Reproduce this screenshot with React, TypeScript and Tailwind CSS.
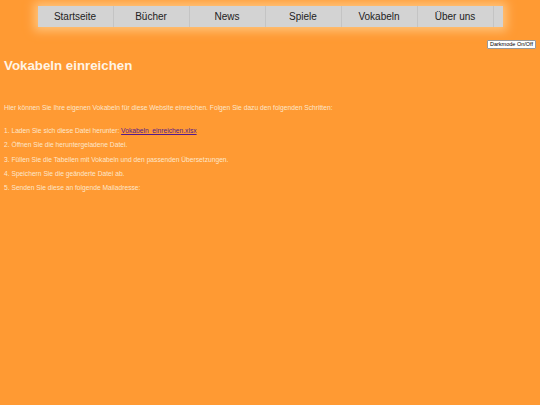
import React from "react";

const items = ["Startseite", "Bücher", "News", "Spiele", "Vokabeln", "Über uns"];

export default function App() {
  return (
    <div className="min-h-[405px] w-[540px] bg-[#ff9a33] font-['Liberation_Sans',Arial,sans-serif] relative">
      <div className="flex justify-center pt-[6px]">
        <div className="flex w-[465px] h-[21px] bg-[#d3d3d3] shadow-[0_0_9px_4px_#ffc27a]">
          {items.map((t) => (
            <div
              key={t}
              className="w-[76px] h-full flex items-center justify-center border-r border-[#c4c4c4] text-[10px] text-[#222]"
            >
              {t}
            </div>
          ))}
        </div>
      </div>
      <div className="flex justify-end pr-[4px] pt-[13px]">
        <button className="bg-white border border-[#999] rounded-[1px] px-[2px] h-[9px] leading-[7px] text-[5.5px] text-black">
          Darkmode On/Off
        </button>
      </div>
      <div className="px-[4px] text-[#fde6cc]">
        <h2 className="text-[13.3px] font-bold text-[#fff4e6] mt-[9px] leading-[16px]">Vokabeln einreichen</h2>
        <p className="text-[6.7px] mt-[30px] leading-[8px]">
          Hier können Sie Ihre eigenen Vokabeln für diese Website einreichen. Folgen Sie dazu den folgenden Schritten:
        </p>
        <div className="text-[6.7px] mt-[15px] flex flex-col gap-[6.3px] leading-[8px]">
          <p>
            1. Laden Sie sich diese Datei herunter:{" "}
            <a className="underline text-[#551a8b]" href="#">Vokabeln_einreichen.xlsx</a>
          </p>
          <p>2. Öffnen Sie die heruntergeladene Datei.</p>
          <p>3. Füllen Sie die Tabellen mit Vokabeln und den passenden Übersetzungen.</p>
          <p>4. Speichern Sie die geänderte Datei ab.</p>
          <p>5. Senden Sie diese an folgende Mailadresse:</p>
        </div>
      </div>
    </div>
  );
}
